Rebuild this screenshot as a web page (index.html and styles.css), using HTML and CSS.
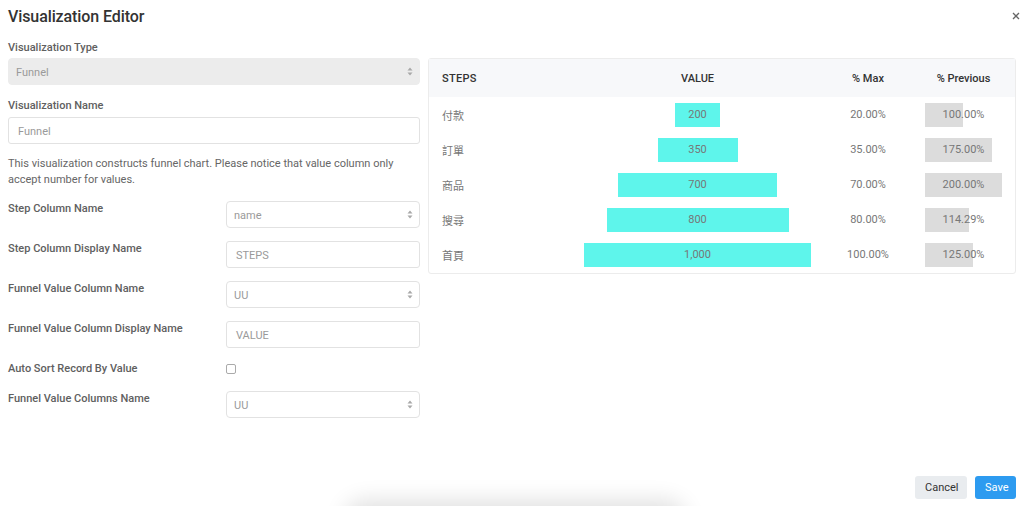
FILE: index.html
```html
<!DOCTYPE html>
<html>
<head>
<meta charset="utf-8">
<link rel="stylesheet" href="styles.css">
</head>
<body>
<div class="modal">
  <div class="header">
    <h1 class="title">Visualization Editor</h1>
    <button class="close" aria-label="close"><svg width="8" height="8" viewBox="0 0 8 8"><path d="M1 1L7 7M7 1L1 7" stroke="#666" stroke-width="1.3"/></svg></button>
  </div>
  <div class="body">
    <div class="form">
      <div class="label">Visualization Type</div>
      <div class="select disabled wide"><span>Funnel</span><svg class="arrows" width="6" height="9" viewBox="0 0 6 9"><path d="M3 0.5L5.5 3.5H0.5Z M3 8.5L5.5 5.5H0.5Z" fill="#a8a8a8"/></svg></div>
      <div class="label l2">Visualization Name</div>
      <div class="input wide"><span>Funnel</span></div>
      <p class="help">This visualization constructs funnel chart. Please notice that value column only accept number for values.</p>
      <div class="row">
        <div class="rlabel">Step Column Name</div>
        <div class="select"><span>name</span><svg class="arrows" width="6" height="9" viewBox="0 0 6 9"><path d="M3 0.5L5.5 3.5H0.5Z M3 8.5L5.5 5.5H0.5Z" fill="#a8a8a8"/></svg></div>
      </div>
      <div class="row">
        <div class="rlabel">Step Column Display Name</div>
        <div class="input"><span>STEPS</span></div>
      </div>
      <div class="row">
        <div class="rlabel">Funnel Value Column Name</div>
        <div class="select"><span>UU</span><svg class="arrows" width="6" height="9" viewBox="0 0 6 9"><path d="M3 0.5L5.5 3.5H0.5Z M3 8.5L5.5 5.5H0.5Z" fill="#a8a8a8"/></svg></div>
      </div>
      <div class="row">
        <div class="rlabel">Funnel Value Column Display Name</div>
        <div class="input"><span>VALUE</span></div>
      </div>
      <div class="row check">
        <div class="rlabel">Auto Sort Record By Value</div>
        <div class="cbwrap"><span class="checkbox"></span></div>
      </div>
      <div class="row">
        <div class="rlabel">Funnel Value Columns Name</div>
        <div class="select"><span>UU</span><svg class="arrows" width="6" height="9" viewBox="0 0 6 9"><path d="M3 0.5L5.5 3.5H0.5Z M3 8.5L5.5 5.5H0.5Z" fill="#a8a8a8"/></svg></div>
      </div>
    </div>
    <div class="preview">
      <div class="grid">
        <div class="th c1">STEPS</div>
        <div class="th c2">VALUE</div>
        <div class="th c3">% Max</div>
        <div class="th c4">% Previous</div>

        <div class="td c1">付款</div>
        <div class="td c2"><div class="vbar" style="width:45px">200</div></div>
        <div class="td c3">20.00%</div>
        <div class="td c4"><div class="pbar" style="--w:50%">100.00%</div></div>

        <div class="td c1">訂單</div>
        <div class="td c2"><div class="vbar" style="width:80px">350</div></div>
        <div class="td c3">35.00%</div>
        <div class="td c4"><div class="pbar" style="--w:87.5%">175.00%</div></div>

        <div class="td c1">商品</div>
        <div class="td c2"><div class="vbar" style="width:159px">700</div></div>
        <div class="td c3">70.00%</div>
        <div class="td c4"><div class="pbar" style="--w:100%">200.00%</div></div>

        <div class="td c1">搜尋</div>
        <div class="td c2"><div class="vbar" style="width:182px">800</div></div>
        <div class="td c3">80.00%</div>
        <div class="td c4"><div class="pbar" style="--w:57.1%">114.29%</div></div>

        <div class="td c1">首頁</div>
        <div class="td c2"><div class="vbar" style="width:227px">1,000</div></div>
        <div class="td c3">100.00%</div>
        <div class="td c4"><div class="pbar" style="--w:62.5%">125.00%</div></div>
      </div>
    </div>
  </div>
  <div class="footer">
    <button class="btn cancel">Cancel</button>
    <button class="btn save">Save</button>
  </div>
  <div class="shadow"></div>
</div>
</body>
</html>
```
FILE: styles.css
```css
* { box-sizing: border-box; }
html, body { margin: 0; padding: 0; background: #fff; overflow: hidden; }
body {
  font-family: "Roboto", "Noto Sans CJK TC", sans-serif;
  font-size: 11px;
  color: #555;
  width: 1024px;
  height: 506px;
}
.modal {
  position: relative;
  height: 506px;
  padding: 0 8px;
  display: flex;
  flex-direction: column;
  overflow: hidden;
}
.header {
  display: flex;
  justify-content: space-between;
  align-items: center;
  height: 32px;
}
.title {
  margin: 0;
  font-size: 16px;
  font-weight: 500;
  color: #333;
  letter-spacing: -0.1px;
}
.close {
  border: 0;
  background: none;
  padding: 0;
  margin-right: -4px;
  display: flex;
}
.body {
  display: flex;
  gap: 8px;
  flex: 1;
}
.form {
  width: 412px;
  flex: none;
}
.label {
  font-weight: 500;
  line-height: 15px;
  margin-top: 8px;
  margin-bottom: 3px;
  color: #606060;
}
.label.l2 { margin-top: 13px; margin-bottom: 4px; }
.select, .input {
  height: 27px;
  border: 1px solid #e2e2e2;
  border-radius: 4px;
  display: flex;
  align-items: center;
  justify-content: space-between;
  padding: 0 6px 0 7px;
  color: #9a9a9a;
  background: #fff;
  width: 194px;
}
.select span, .input span { padding-top: 1px; }
.input { padding-left: 9px; border-radius: 3px; }
.wide { width: 412px; }
.select.disabled { background: #ececec; border-color: #ececec; }
.help {
  margin: 11px 0 14px;
  line-height: 16px;
  color: #666;
  padding-top: 1px;
}
.help + .row { margin-top: -1px; }
.row {
  display: flex;
  margin-bottom: 13px;
}
.rlabel {
  width: 218px;
  font-weight: 500;
  line-height: 14px;
  padding-top: 1px;
  flex: none;
  color: #606060;
}
.row.check { height: 17px; }
.cbwrap { display: flex; align-items: flex-start; padding-top: 3px; }
.checkbox {
  width: 10px;
  height: 10px;
  border: 1px solid #aaa;
  border-radius: 2px;
  background: #fff;
}
.preview {
  width: 588px;
  height: 216px;
  margin-top: 26px;
  border: 1px solid #ececec;
  border-radius: 3px;
}
.grid {
  display: grid;
  grid-template-columns: 142px 253px 88px 103px;
  grid-template-rows: 38px repeat(5, 35px);
}
.th {
  background: #f7f8fa;
  color: #333;
  font-weight: 500;
  display: flex;
  align-items: center;
  padding: 0 13px;
}
.td {
  display: flex;
  align-items: center;
  padding: 0 13px;
  color: #777;
}
.c2, .c3, .c4 { justify-content: center; }
.th.c1 { letter-spacing: 0.3px; }
.vbar {
  height: 24px;
  background: #5ef5eb;
  display: flex;
  align-items: center;
  justify-content: center;
  white-space: nowrap;
  flex: none;
}
.pbar {
  width: 100%;
  height: 24px;
  display: flex;
  align-items: center;
  justify-content: center;
  background: linear-gradient(to right, #dcdcdc var(--w), transparent var(--w));
}
.footer {
  display: flex;
  justify-content: flex-end;
  gap: 8px;
  padding-bottom: 7px;
}
.btn {
  font-family: inherit;
  font-size: 11px;
  height: 23px;
  border: 0;
  border-radius: 3px;
  padding: 0 10px;
}
.cancel { background: #e9ecef; color: #333; width: 52px; }
.save { background: #2d9bf0; color: #fff; width: 41px; }
.shadow {
  position: absolute;
  left: 350px;
  width: 330px;
  bottom: -30px;
  height: 30px;
  box-shadow: 0 0 22px 6px rgba(0,0,0,0.12);
  border-radius: 40px;
}
```
